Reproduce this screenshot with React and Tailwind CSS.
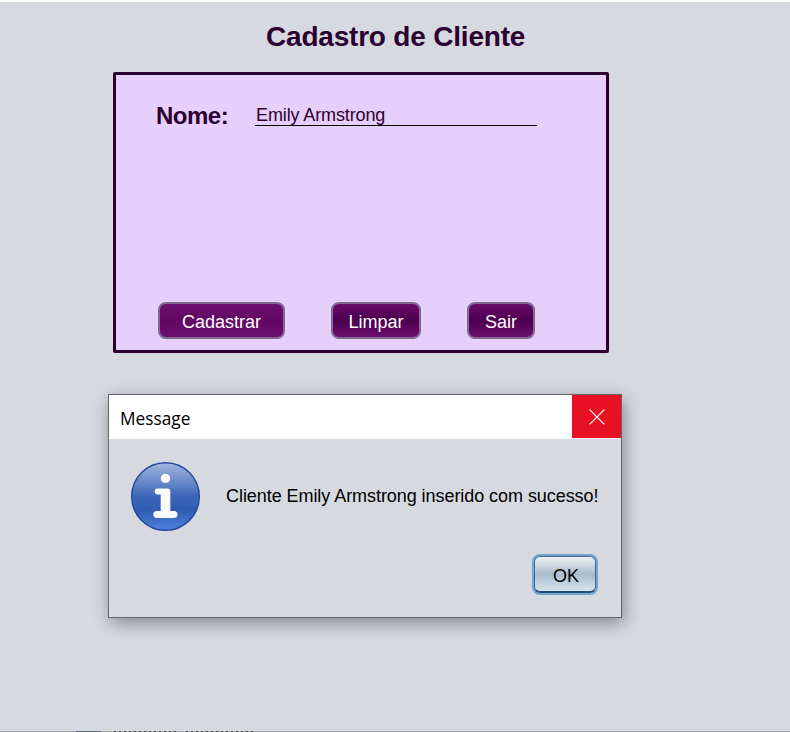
import React from "react";

function FormButton({ className, children }) {
  return (
    <button
      className={`h-[37px] rounded-[8px] border-2 border-[#80698d] pt-[2px] text-[18px] leading-[33px] text-white ${className}`}
    >
      {children}
    </button>
  );
}

function InfoIcon() {
  return (
    <svg width="70" height="70" viewBox="0 0 70 70" className="block shrink-0">
      <defs>
        <linearGradient id="info" x1="0" y1="0" x2="0" y2="1">
          <stop offset="0" stopColor="#a3b6de" />
          <stop offset="0.25" stopColor="#6f8fcb" />
          <stop offset="0.5" stopColor="#3a66b7" />
          <stop offset="0.7" stopColor="#2f5cb3" />
          <stop offset="1" stopColor="#5082e0" />
        </linearGradient>
      </defs>
      <circle cx="34.5" cy="34.5" r="33.8" fill="url(#info)" stroke="#24479a" strokeWidth="1.4" />
      <circle cx="34.5" cy="16.4" r="4.7" fill="#fafbff" />
      <path
        d="M26.7 26.5H36.3Q39.3 26.5 39.3 29.5V49H43A3.5 3.5 0 0 1 43 56H25.8A3.5 3.5 0 0 1 25.8 49H29.7V32.5H26.7A3 3 0 0 1 26.7 26.5Z"
        fill="#fafbff"
      />
    </svg>
  );
}

function RegisterPanel() {
  return (
    <section className="ml-[113px] mt-[17px] flex h-[281px] w-[496px] flex-col rounded-[2px] border-[3px] border-[#2b0030] bg-[#e6d0fb]">
      <div className="mt-[27px] flex items-start pl-[39px] text-[#2b0030]">
        <label className="w-[100px] pl-px text-[24px] font-bold leading-[28px] tracking-[-0.5px]">Nome:</label>
        <div className="h-[24px] w-[282px] border-b border-black pl-px text-[18px] leading-[26px] tracking-[-0.12px]">
          Emily Armstrong
        </div>
      </div>
      <div className="mt-auto flex pb-[11px] pl-[42px]">
        <FormButton className="w-[127px] bg-linear-to-b from-[#6d1070] via-[#620762] to-[#6b0f70]">
          Cadastrar
        </FormButton>
        <FormButton className="ml-[46px] w-[90px] bg-linear-to-b from-[#6a0c6c] via-[#4b004e] to-[#6d1070]">
          Limpar
        </FormButton>
        <FormButton className="ml-[46px] w-[68px] bg-linear-to-b from-[#6a0c6c] via-[#4b004e] to-[#6d1070]">
          Sair
        </FormButton>
      </div>
    </section>
  );
}

function MessageDialog() {
  return (
    <section className="ml-[108px] mt-[41px] flex h-[224px] w-[514px] flex-col border border-[#62656a] bg-[#d6d9df] text-black shadow-[2px_5px_16px_rgba(0,0,0,0.38)]">
      <header className="flex h-[44px] shrink-0 justify-between bg-white">
        <span className="pl-[11px] pt-px font-['Open_Sans',sans-serif] text-[17.3px] leading-[45px]">Message</span>
        <button className="flex h-[43px] w-[49px] items-center justify-center bg-[#e81123]">
          <svg width="16" height="16" viewBox="0 0 16 16" stroke="#fff" strokeWidth="1.2">
            <path d="M.7.7 15.3 15.3M15.3.7.7 15.3" />
          </svg>
        </button>
      </header>
      <div className="mt-[23px] flex items-start pl-[22px]">
        <InfoIcon />
        <p className="ml-[25px] mt-[22px] whitespace-nowrap text-[18px] leading-[24px] tracking-[-0.06px]">
          Cliente Emily Armstrong inserido com sucesso!
        </p>
      </div>
      <div className="mt-[24px] flex justify-end pr-[25px]">
        <button className="h-[37px] w-[62px] rounded-[6px] border border-b-2 border-[#436b92] border-b-[#294f75] bg-linear-to-b from-[#edf1f5] via-[#a9bccc] to-[#d5e4f0] pl-[2px] pt-px text-[18px] leading-[36px] ring-2 ring-[#73a4d1]">
          OK
        </button>
      </div>
    </section>
  );
}

export default function App() {
  return (
    <main className="flex h-[732px] w-[790px] flex-col overflow-hidden border-t-2 border-white bg-[#d6d9df] font-['Liberation_Sans',Arial,sans-serif]">
      <h1 className="mt-[17px] h-[36px] pl-[266px] text-[28px] font-bold leading-[36px] tracking-[-0.2px] text-[#2b0030]">
        Cadastro de Cliente
      </h1>
      <RegisterPanel />
      <MessageDialog />
      <div className="mt-auto flex h-px shrink-0 bg-[#a5a7ad] pl-[76px]">
        <div className="w-[25px] bg-[#686d7b]" />
        <div className="ml-[13px] w-[62px] bg-[repeating-linear-gradient(90deg,#444_0_2px,#a5a7ad_2px_5px)]" />
        <div className="ml-[10px] w-[68px] bg-[repeating-linear-gradient(90deg,#444_0_2px,#a5a7ad_2px_5px)]" />
      </div>
    </main>
  );
}
